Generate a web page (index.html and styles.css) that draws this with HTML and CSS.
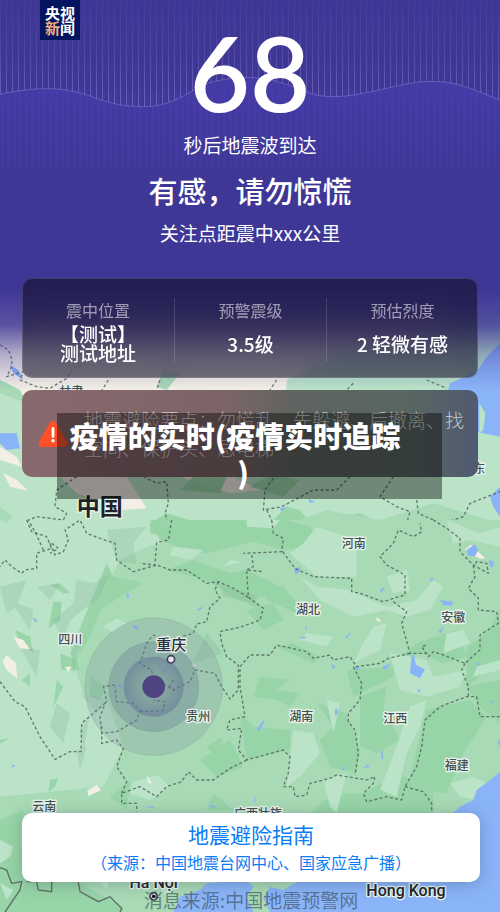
FILE: index.html
```html
<!DOCTYPE html>
<html lang="zh-CN">
<head>
    <meta charset="utf-8">
    <meta name="viewport" content="width=device-width, initial-scale=1.0">
    <title>地震预警</title>
    <link rel="stylesheet" href="styles.css">
</head>
<body>
<main class="screen">

    <!-- Map -->
    <svg class="map" viewBox="0 0 1500 2736" preserveAspectRatio="xMidYMid slice">
        <defs>
            <radialGradient id="ring">
                <stop offset="0.35" stop-color="#5f6e86" stop-opacity="0.1"/>
                <stop offset="1" stop-color="#5f6e96" stop-opacity="0.5"/>
            </radialGradient>
        </defs>
        <rect class="light" width="1500" height="2736"/>

        <!-- north -->
        <g transform="translate(0 870)">
            <path class="cream" d="M0 0H1340V190L1150 250 860 290 850 420 760 390 600 470 700 560 780 600 690 610 540 560 470 500 380 560 440 655 370 660 230 610 120 500 60 300 0 270Z"/>
            <path class="light" d="M860 270L1000 200 1340 160V500H860Z"/>
            <path class="mid" d="M0 270L60 300 80 340 0 310ZM470 290L490 240 540 250 500 300Z"/>
            <path class="cream" d="M0 470L50 500 65 530 0 510ZM10 550L50 570 85 602 30 590Z"/>
            <path class="sea" d="M1500 160L1460 200 1430 245 1350 280 1342 310 1400 420 1500 440Z"/>
            <path class="light" d="M1438 340L1456 370 1450 420 1438 430Z"/>
            <path class="sea" d="M1500 590L1470 620 1480 650 1500 680ZM0 430L50 430 60 475 20 480 0 460ZM30 225L55 240 70 270 40 250ZM840 655L860 650 845 665ZM1305 650L1325 670 1318 685ZM925 627L945 635 930 640Z"/>
            <path class="dark" d="M450 700L500 670 600 700 720 690 780 730 860 650 900 660 930 700 1080 670 1140 700 1080 770 930 780 750 780 640 745 540 750 450 730ZM540 600L580 560 680 560 660 610ZM750 590L810 555 900 570 850 620Z"/>
            <path class="mid" d="M820 720L980 660 1140 690 1300 640 1500 700V800H790ZM0 650L40 680 20 700 0 690Z"/>
            <g class="border">
                <path d="M0 165Q40 180 35 230L20 260 70 245 60 270 110 290 150 295 200 265 250 200M325 270L300 310M480 270L470 300M830 270L810 300M1280 270L1340 295M1060 280L1040 300 1025 315"/>
                <path d="M230 560L170 600 165 650 200 670 190 690 110 680 85 690 110 735 130 780M430 560L470 580 500 575 505 640 495 670 510 720 515 770M820 565L795 600 790 660 845 650 940 600 1010 600 1050 560M800 660L820 700 840 760M1180 560L1140 620 1190 650 1230 665 1220 700 1260 730M1250 630L1255 670 1300 690 1330 700 1390 680 1410 640 1500 605"/>
            </g>
        </g>

        <!-- south -->
        <g transform="translate(0 1560)">
            <path class="mid" d="M450 0L520 60 440 80 360 120 330 180 430 190 320 240 260 320 210 400 250 520 320 540 370 680 310 800 0 830V1176H1500V0Z"/>
            <path class="dark" d="M450 0H860L930 20 960 75 850 90 760 65 620 100 530 80 480 60ZM500 150L580 120 690 160 740 150 840 200 820 230 760 230 780 270 700 230 620 180ZM740 270L820 250 850 300 790 330ZM760 180L850 200 900 260 890 280 800 240Z"/>
            <path class="dark" d="M320 130L340 170 430 190 360 230 300 270 270 350 240 400 230 350 270 250ZM150 195L180 190 210 220 190 220ZM160 245L185 245 180 300 145 325ZM45 330L90 350 100 400 60 370ZM180 400L230 420 240 450 185 450ZM65 480L90 460V500ZM170 480L190 500 160 560ZM270 470L320 500 300 540 270 530ZM0 660L30 655 0 670ZM150 780L175 775 165 800 145 815Z"/>
            <path class="dark" d="M780 470L870 480 830 510 900 520 870 560 830 540 760 530ZM830 380L940 430 960 410 880 370ZM1040 450L1180 440 1180 470 1060 530ZM1250 370L1370 330 1400 410 1330 430 1270 400 1200 410ZM1400 380L1460 340 1500 270V420L1400 500ZM1400 500L1500 480V610L1440 560ZM1280 570L1410 540 1460 590 1390 700 1340 820 1220 810 1240 730ZM950 550L1040 580 1080 690 1070 760 990 740 960 660 1000 620ZM720 580L760 620 870 630 870 690 740 720ZM1080 530L1160 500 1150 560 1200 660 1130 700 1080 680ZM600 720L690 660 730 740 650 770ZM620 680L670 650 650 710ZM1090 820L1200 760 1300 820V880H930L1000 820Z"/>
            <path class="light" d="M950 20L1070 60 1070 170 950 170 870 100 910 70ZM1160 170L1220 150 1230 210 1180 220ZM900 170L950 200 1050 210 1160 260 1250 240 1300 180 1330 200 1290 270 1220 290 1160 270 1060 290 960 240ZM1120 320L1160 310 1140 390 1060 430 1090 370ZM1170 400L1280 420 1300 470 1400 450 1380 500 1280 530 1200 510 1180 440ZM1230 560L1280 540 1260 620 1220 700 1190 830 1140 810 1190 680ZM980 540L1020 550 1000 640ZM880 630L940 640 960 700 900 770 860 800ZM970 780L1040 760 1010 880 990 860ZM1350 790L1420 770 1460 790 1430 840 1380 830ZM1430 440L1500 420V450L1420 470ZM920 340L1000 350 980 380 900 360ZM520 80L610 90 570 120 510 105ZM310 320L350 295 380 310 340 340ZM690 120L730 125 670 140Z"/>
            <path class="light" d="M400 785L470 765 510 800 450 840 390 820ZM740 0L840 0 820 25 740 20ZM1340 340L1390 330 1410 370 1330 400ZM1340 0L1440 40 1500 20V80L1410 60 1360 70Z"/>
            <path class="shade" d="M320 30L440 20 400 70 410 130 350 125ZM230 180L280 190 330 160 300 230 210 300 190 360 160 300 220 250ZM0 200L80 180 50 260 20 280ZM110 200L180 190 150 240ZM60 380L120 390 110 470ZM170 550L210 580 190 670 150 620ZM230 690L260 680 240 750ZM240 630L270 580 250 700ZM660 195L780 230 760 250 670 230ZM620 340L670 400 580 430ZM210 350L240 370 220 470ZM30 240L100 270 90 330ZM240 520L330 540 290 580Z"/>
            <path class="cream" d="M40 350L70 360 90 388 60 385ZM20 405L48 430 52 475 20 450 8 425ZM262 812L290 795 304 810 265 828ZM1430 90L1455 115 1440 117 1420 105ZM1395 90L1410 75 1430 80 1425 100ZM440 765L455 790 445 790ZM1130 290L1145 305 1130 303ZM575 430L590 438 577 440ZM195 440L215 440 205 455Z"/>
            <path class="dark" d="M0 900L70 870 60 970 100 1060 240 1090 370 1160V1176H0ZM330 830L390 780 380 870ZM640 820L700 870H620Z"/>
            <path class="light" d="M0 960L40 980 30 1010 0 1030ZM280 1060L330 1070 320 1110ZM470 1086L560 1070 500 1130ZM0 1090L40 1110 20 1140Z"/>
            <path class="sea" d="M1500 755L1470 780 1430 810 1420 840 1380 860 1300 930 1100 1010 900 1080 850 1110 810 1100 790 1135 810 1176H1500ZM520 1176L540 1130 600 1110 620 1090 740 1080 760 1100 740 1130 760 1176Z"/>
            <path class="sea" d="M1235 405L1242 405 1248 435 1275 448 1260 475 1230 460ZM1400 90L1425 72 1435 90 1425 108 1405 108ZM1468 120L1482 125 1478 143 1468 135ZM883 145L900 140 900 155 885 163ZM1320 240L1360 245 1355 257 1330 255ZM992 430L1007 440 1000 448ZM395 318L410 317 418 325 408 328ZM380 220H386V235H380ZM590 270L610 258 600 272ZM1140 210L1157 198 1145 218ZM485 455L505 443 495 459ZM1145 440L1175 430 1155 450ZM1090 743L1103 733 1108 742ZM1025 740L1035 743 1030 755ZM1142 693H1148L1150 720 1144 715ZM770 630L790 600 794 605 778 633ZM1005 567H1013V585H1005ZM97 292L111 300 107 309ZM1290 175H1300L1298 182H1290ZM1250 507L1262 510 1257 518ZM1035 350L1055 335 1040 355ZM1315 335L1330 318 1325 340ZM1470 540L1483 543 1475 550ZM1425 430H1440L1435 436ZM435 858L460 860 465 865 440 862ZM620 853L650 860 640 864ZM355 495H368V500H355ZM900 350H918V355H900ZM915 320H920V328H915ZM36 735H43V742H36ZM1060 443L1080 440 1072 452ZM765 825L768 840 762 848ZM1495 660H1500V675H1495Z"/>
            <g class="border">
                <path d="M80 0L95 35 140 50 155 85 110 100 110 145 75 150 65 160 35 140 15 120 0 140M150 70L165 105 190 95 205 60 195 30 240 0 260 40 300 55 345 70 350 120 400 155 470 135 510 150 560 150 620 190 655 185 700 205 745 232 740 150 790 155M515 0L505 60 470 68 465 135 420 130M155 70L175 85 150 100"/>
                <path d="M655 185L645 210 660 235 630 260 620 305 590 312 580 340 500 360 460 345 440 370 430 400 420 430 455 450 460 480M745 232L790 265 780 300 725 320 660 335 665 370 680 410 715 435 715 510 690 537 665 500 645 460 585 450 570 485 520 510 495 495M520 480L510 500 525 515M345 495L310 500 320 540 300 590 305 640 350 635 410 600 420 570 400 550 350 545 345 500M420 575L490 572 495 545 460 540M0 485L45 545 75 560 120 650 165 718 210 695 243 695 245 610 280 580 320 545"/>
                <path d="M815 0L820 40 850 55 845 95 730 100M755 105L760 140 740 150M848 95L885 145 940 170 1055 175 1055 215 1080 220 1150 245 1180 235 1215 225 1215 165 1160 135 1140 110 1180 70 1195 30 1240 50 1265 35 1260 10M1300 0L1340 25 1380 55 1380 95 1420 135 1465 160 1460 130 1430 125 1420 140 1425 170 1405 205 1435 235 1435 270 1490 275 1495 310 1440 345 1440 390 1395 430 1330 405 1300 395 1285 410 1265 380 1280 375M1180 245L1220 275 1205 310 1230 400 1285 400M1230 400L1165 415 1140 430 1070 440 1050 410 1000 420 990 405 940 415 920 395 830 375 810 405 750 405 720 440 720 500 735 590 690 600 680 630 725 625 715 690 740 720 850 690 870 710 865 760 850 800 880 800 885 830 920 825 930 790 990 775 1010 765 1100 780 1125 770 1120 790 1090 820 1100 845 1160 830 1205 840 1215 800 1250 740 1265 680 1275 600 1320 560 1400 530 1430 530 1440 590 1500 590M1060 440L1085 490 1080 540 1045 580 1045 605 1065 630 1075 700 1065 765M1395 430L1385 450 1405 500 1405 530M1215 800L1270 815 1295 850V875M740 720L690 745 640 780 590 780 565 755 545 785 500 800 470 830 420 800 365 820 365 850 410 850 410 875M365 820L380 785 350 740 370 685 350 660 305 670 305 610"/>
            </g>
            <path class="frontier" d="M0 1043L20 1050 35 1090 65 1085 60 1110 15 1176M80 1085L110 1085 115 1110 155 1115 155 1086M235 1086L240 1115 295 1145 330 1130 365 1165 360 1176"/>

            <!-- epicentre -->
            <circle class="wave" cx="461" cy="500" r="206"/>
            <circle class="wave mid-wave" cx="461" cy="500" r="135"/>
            <circle cx="461" cy="500" r="90" fill="url(#ring)"/>
            <circle cx="461" cy="500" r="34" fill="#4f4480"/>
            <circle class="town" cx="513" cy="418" r="11"/>
            <circle class="town capital" cx="461" cy="1129" r="11"/>
            <circle cx="461" cy="1129" r="5"/>
        </g>

        <g class="labels">
            <text x="214" y="1188">甘肃</text>
            <text x="1438" y="1418">东</text>
            <text x="1061" y="1644">河南</text>
            <text x="924" y="1841">湖北</text>
            <text x="1360" y="1867">安徽</text>
            <text x="211" y="1931">四川</text>
            <text x="595" y="2162">贵州</text>
            <text x="904" y="2162">湖南</text>
            <text x="1186" y="2168">江西</text>
            <text x="1370" y="2311">福建</text>
            <text x="133" y="2432">云南</text>
            <text x="774" y="2455">广西壮族</text>
            <text class="city" x="514" y="1950">重庆</text>
            <text class="country" x="299" y="1544">中国</text>
            <text class="latin" x="461" y="2664">Ha Nội</text>
            <text class="latin" x="1218" y="2689">Hong Kong</text>
        </g>
    </svg>
    <div class="sky"></div>

    <!-- Seismic wave behind the countdown -->
    <svg class="seismic" viewBox="0 0 1500 600" preserveAspectRatio="none">
        <defs>
            <linearGradient id="fade" x1="0" y1="0" x2="0" y2="1">
                <stop offset="0" stop-color="#fff" stop-opacity="0.1"/>
                <stop offset="0.5" stop-color="#fff" stop-opacity="0.4"/>
                <stop offset="1" stop-color="#fff"/>
            </linearGradient>
            <linearGradient id="glow" x1="0" y1="0" x2="0" y2="1">
                <stop offset="0" stop-color="#4a3fb2" stop-opacity="0.6"/>
                <stop offset="1" stop-color="#4438a8" stop-opacity="0"/>
            </linearGradient>
            <pattern id="bars" width="18" height="600" patternUnits="userSpaceOnUse">
                <rect width="3" height="600" fill="#9d94d8" opacity="0.5"/>
            </pattern>
            <pattern id="lowbars" width="18" height="600" patternUnits="userSpaceOnUse">
                <rect x="5" width="6" height="600" fill="#5548c8" opacity="0.35"/>
            </pattern>
            <mask id="top"><rect width="1500" height="320" fill="url(#fade)"/></mask>
        </defs>
        <path fill="url(#glow)" d="M0 283C80 265 160 260 225 275S330 320 430 320 580 260 640 245 780 225 850 250 940 290 1000 290C1100 290 1200 245 1290 244S1430 275 1500 300V550H0Z"/>
        <path fill="url(#bars)" mask="url(#top)" d="M0 0V283C80 265 160 260 225 275S330 320 430 320 580 260 640 245 780 225 850 250 940 290 1000 290C1100 290 1200 245 1290 244S1430 275 1500 300V0Z"/>
        <rect y="270" width="1500" height="240" fill="url(#lowbars)" opacity="0.5"/>
        <path class="crest" d="M0 283C80 265 160 260 225 275S330 320 430 320 580 260 640 245 780 225 850 250 940 290 1000 290C1100 290 1200 245 1290 244S1430 275 1500 300"/>
    </svg>

    <div class="logo">央视<br><span>新</span>闻</div>

    <header class="hero">
        <div class="count">68</div>
        <p>秒后地震波到达</p>
        <h1>有感，请勿惊慌</h1>
        <p>关注点距震中xxx公里</p>
    </header>

    <dl class="summary">
        <div>
            <dt>震中位置</dt>
            <dd>【测试】<br>测试地址</dd>
        </div>
        <div>
            <dt>预警震级</dt>
            <dd>3.5级</dd>
        </div>
        <div>
            <dt>预估烈度</dt>
            <dd>2 轻微有感</dd>
        </div>
    </dl>

    <section class="advice">
        <svg class="warning" viewBox="0 0 30 28">
            <path d="M12 2.500Q15-1.500 18 2.500L28.500 21Q31 27 25 27H5Q-1 27 1.500 21Z" fill="#ff4f26"/>
            <path d="M15 8.500V16.500" stroke="#fff" stroke-width="2.800" stroke-linecap="round"/>
            <circle cx="15" cy="20.800" r="1.700" fill="#fff"/>
        </svg>
        <p>地震避险要点：勿慌乱、先躲避、后撤离、找空间、保护头、忌电梯</p>
        <h2 class="caption">疫情的实时(疫情实时追踪<br>)</h2>
    </section>

    <footer class="bottom">
        <a class="guide" href="#guide">
            <strong>地震避险指南</strong>
            <span>（来源：中国地震台网中心、国家应急广播）</span>
        </a>
        <p class="source">消息来源:中国地震预警网</p>
    </footer>

</main>
</body>
</html>
```
FILE: styles.css
```css
:root {
    --purple: #3f3796;
    --blue:   #0a7cf5;
    --gutter: 22px;
}

* {
    box-sizing: border-box;
}

body, p, h1, h2, dl, dd {
    margin: 0;
}

body {
    font-family: "Noto Sans CJK SC", sans-serif;
    background-color: #a8dab5;
}

.screen {
    display: flex;
    flex-direction: column;
    position: relative;
    min-height: 100vh;
    overflow: hidden;
}

/* Map */
.map {
    position: absolute;
    top: 0;
    left: 0;
    width: 100%;
    height: 100%;
}

.light { fill: #bae3c8; }
.mid   { fill: #a8dab5; }
.dark  { fill: #94d2a5; opacity: 0.85; }
.cream { fill: #f3efe6; }
.sea   { fill: #8ab4f8; }
.shade { fill: #7fae92; opacity: 0.25; }

.border {
    fill: none;
    stroke: #4f5f59;
    stroke-width: 4;
    stroke-dasharray: 9 7;
    stroke-linejoin: round;
    opacity: 0.8;
}

.frontier {
    fill: none;
    stroke: #5f6e68;
    stroke-width: 4;
}

.wave {
    fill: #7d8fa0;
    fill-opacity: 0.25;
    stroke: #6d8590;
    stroke-opacity: 0.35;
    stroke-width: 2;
}

.mid-wave {
    fill: #5f7590;
    fill-opacity: 0.3;
}

.town {
    fill: #e4e2ee;
    stroke: #444255;
    stroke-width: 5;
}

.labels {
    font-size: 36px;
    font-weight: 500;
    fill: #42504f;
    stroke: #e8f3ec;
    stroke-width: 8;
    stroke-linejoin: round;
    paint-order: stroke;
    text-anchor: middle;
}

.labels .city {
    font-size: 45px;
    fill: #2b2f40;
}

.labels .country {
    font-size: 69px;
    font-weight: 700;
    fill: #1d2326;
}

.labels .latin {
    font-family: Roboto, sans-serif;
    font-size: 48px;
    fill: #22262a;
}

.sky {
    position: absolute;
    top: 0;
    left: 0;
    width: 100%;
    height: 390px;
    background: linear-gradient(var(--purple) 290px, rgba(63, 55, 150, 0.85) 325px, rgba(63, 55, 150, 0.35) 355px, rgba(63, 55, 150, 0) 390px);
}

.seismic {
    position: absolute;
    top: 0;
    left: 0;
    width: 100%;
    height: 200px;
}

.crest {
    fill: none;
    stroke: #8f84dc;
    stroke-width: 2;
    opacity: 0.7;
}

.logo {
    position: absolute;
    top: 0;
    left: 40px;
    width: 40px;
    height: 40px;
    padding: 5px 0;
    background-color: #04145e;
    color: #fff;
    font-size: 15px;
    font-weight: 700;
    line-height: 15px;
    text-align: center;
}

.logo span {
    color: #eeb083;
}

/* Countdown */
.hero {
    position: relative;
    padding: 22px var(--gutter) 32px;
    color: #fff;
    text-align: center;
}

.count {
    font-family: Lato, sans-serif;
    font-size: 104px;
    font-weight: 600;
    line-height: 100px;
    margin-bottom: 10px;
}

.hero p {
    font-size: 19px;
    line-height: 26px;
}

.hero h1 {
    margin: 12px 0 10px;
    font-size: 29px;
    font-weight: 500;
    line-height: 40px;
}

/* Cards */
.summary {
    display: grid;
    grid-template-columns: repeat(3, 1fr);
    position: relative;
    margin: 0 var(--gutter) 12px;
    padding: 20px 0 16px;
    border-radius: 10px;
    background-color: rgba(8, 4, 20, 0.5);
    -webkit-backdrop-filter: blur(10px);
            backdrop-filter: blur(10px);
    box-shadow: inset 0 0 0 1px rgba(255, 255, 255, 0.15);
    text-align: center;
}

.summary div + div {
    border-left: 1px solid rgba(255, 255, 255, 0.15);
}

.summary dt {
    color: rgba(255, 255, 255, 0.55);
    font-size: 16px;
    line-height: 24px;
}

.summary dd {
    display: flex;
    align-items: center;
    justify-content: center;
    min-height: 40px;
    padding-top: 2px;
    color: #fff;
    font-size: 19px;
    font-weight: 500;
    line-height: 19px;
}

.advice {
    display: flex;
    align-items: center;
    gap: 16px;
    position: relative;
    margin: 0 var(--gutter);
    padding: 16px 14px 15px 16px;
    border-radius: 10px;
    background: linear-gradient(90deg, #88696e, #7c6468 45%, #5f6460 60%, #586661 85%, #505a72);
    color: rgba(255, 255, 255, 0.65);
    font-size: 19px;
    font-weight: 300;
    line-height: 28px;
}

.warning {
    flex: none;
    width: 30px;
    height: 28px;
}

.caption {
    position: absolute;
    top: 23px;
    left: 35px;
    right: 36px;
    padding: 4px 14px 10px 1px;
    background-color: rgba(0, 0, 0, 0.4);
    color: #fff;
    font-size: 29px;
    font-weight: 900;
    line-height: 36px;
    text-align: center;
    text-indent: -16px;
}

/* Bottom */
.bottom {
    position: relative;
    margin-top: auto;
    padding: 0 20px 0 var(--gutter);
    text-align: center;
}

.guide {
    display: block;
    padding: 6px 0 8px;
    border-radius: 10px;
    background-color: #fff;
    box-shadow: 0 2px 16px rgba(40, 60, 80, 0.3);
    color: var(--blue);
    text-decoration: none;
}

.guide strong {
    display: block;
    font-size: 21px;
    font-weight: 400;
    line-height: 31px;
}

.guide span {
    display: block;
    font-size: 16px;
    line-height: 24px;
}

.source {
    padding-top: 6px;
    color: rgba(50, 70, 80, 0.6);
    font-size: 19px;
    line-height: 24px;
}
```
